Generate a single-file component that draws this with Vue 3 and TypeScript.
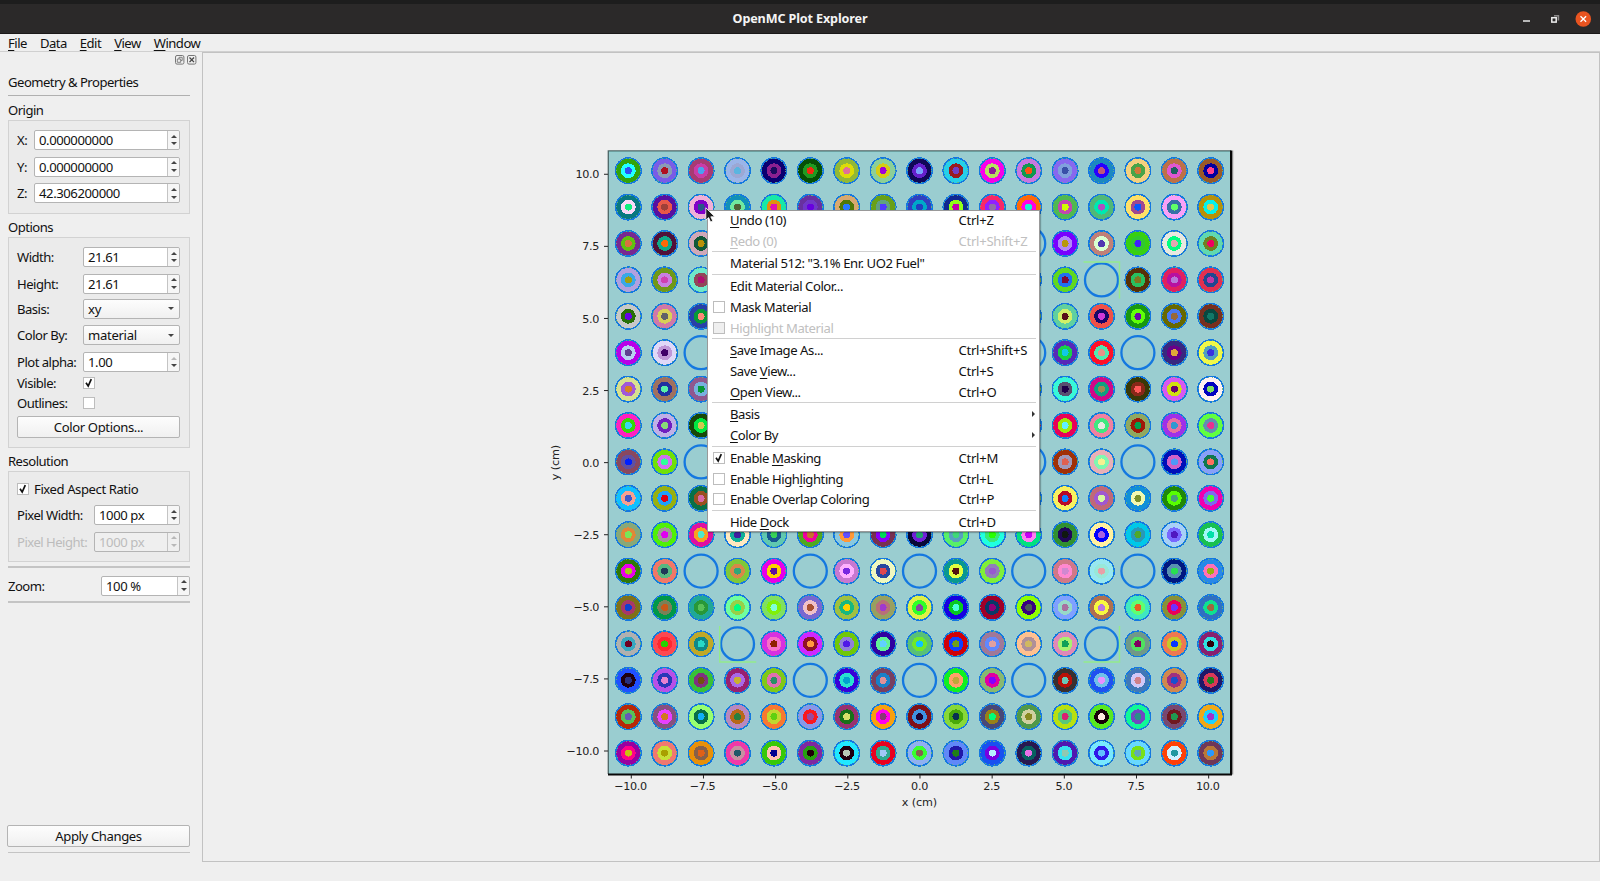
<script setup lang="ts">
interface MenuItem {
  label: string
  key?: string
  check?: 'on' | 'off'
  disabled?: boolean
  submenu?: boolean
}
interface Pin {
  x: number
  y: number
  guide: boolean
  colors: string[]
}

const barMenus = ['&File', 'D&ata', '&Edit', '&View', '&Window']

// Splits "Save &View" into the text before, the mnemonic letter, and the rest.
function parts(label: string): [string, string, string] {
  const i = label.indexOf('&')
  if (i < 0) return [label, '', '']
  return [label.slice(0, i), label[i + 1], label.slice(i + 2)]
}

const groups: MenuItem[][] = [
  [
    { label: '&Undo (10)', key: 'Ctrl+Z' },
    { label: '&Redo (0)', key: 'Ctrl+Shift+Z', disabled: true },
  ],
  [{ label: 'Material 512: "3.1% Enr. UO2 Fuel"' }],
  [
    { label: 'Edit Material Color...' },
    { label: 'Mask Material', check: 'off' },
    { label: 'Highlight Material', check: 'off', disabled: true },
  ],
  [
    { label: '&Save Image As...', key: 'Ctrl+Shift+S' },
    { label: 'Save &View...', key: 'Ctrl+S' },
    { label: '&Open View...', key: 'Ctrl+O' },
  ],
  [
    { label: '&Basis', submenu: true },
    { label: '&Color By', submenu: true },
  ],
  [
    { label: 'Enable &Masking', key: 'Ctrl+M', check: 'on' },
    { label: 'Enable High&lighting', key: 'Ctrl+L', check: 'off' },
    { label: 'Enable Overlap Coloring', key: 'Ctrl+P', check: 'off' },
  ],
  [{ label: 'Hide &Dock', key: 'Ctrl+D' }],
]

const origin = [
  { name: 'X:', value: '0.000000000' },
  { name: 'Y:', value: '0.000000000' },
  { name: 'Z:', value: '42.306200000' },
]

// One string per lattice row: cladding/annulus/centre colours; G is a guide tube,
// a number skips that many positions.
const lattice: string[] = [
  '33a30a/22ffff/2f4ff0 7a5ce6/8a9bb5/b01020 a83a72/c93ca8/4aa0f0 9bb5e8/9ca8d4/5ab5e0 0a0070/8a2090/1a0a60 065006/209a20/f02a10 92b836/dcdc08/e07098 8ccf98/d6cc14/a000d8 100858/6620cc/78a0ff 25d0e8/981c20/7040c8 f800e8/b8e060/8c1c98 c878e0/109850/ff5010 8868ee/80a0dd/3a50a8 1c88c0/2800ff/c05878 f4d080/48a448/d07838 bc7048/e058d0/206060 9a5a28/0000a0/ff4090',
  '087880/f8d8f8/10f080 5810a0/e85848/a04038 f0b0d8/8000c8/285888 1090b8/70e8a0/506038 18e8a8/e09010/e010b0 6830a0/7038c8/6800e0 d8a870/507808/2878ff 68a018/60a080/5038ff 3040c0/00a8c8/2040c0 102890/90ff18/c000b0 f82868/9020ff/9070a8 ff6808/ff00e0/18f0d0 50b850/c048b0/d0ff00 50b878/00e8b0/b050c0 ffe068/a04890/0858ff f8a0f8/3870a8/60ff68 b89008/08f0e8/e0c850',
  '782890/60c010/d87040 501038/10a888/ff6808 d0a8b8/105838/b89008 8 G 7800ff/b088f8/b8980f c08078/d8ffd0/5038b0 38d010/30c830/4020ff e8e8e0/00ff80/e0a8b0 60d8b0/708020/f00060',
  'b0a0e0/38a8e8/a0a010 709818/c880e0/d040b0 70e8c8/904858/b01070 8 b8b020/b8b020/b8b020 60d820/2070f0/800838 G 583008/28c060/807820 e02060/b810a0/b878d8 e03050/204890/c038a8',
  'c8c8c8/287008/6800e8 d078a8/d8d058/606068 2840a8/089838/ff8878 8 68a070/68a070/68a070 60d0a0/d0f068/581018 f05048/180868/d038d8 189810/60ff08/6808a8 686800/4878f0/986838 783020/084840/107868',
  'b800e8/b8d0f0/604090 e0d8f8/c098d8/400068 G 8 G 5828b8/18d048/10c8e8 ff1028/50e8b0/e89088 G 382880/680088/e0a838 f0f848/50a0c0/3830e0',
  'd8e090/a058d8/d88020 a07060/2030a0/58f0a8 905890/78b0e0/089838 8 70a018/70a018/70a018 38f8d8/585070/200048 d00888/10a080/a08850 383808/882818/ff5858 d858f0/d0e010/680070 fff0f0/0000c0/80e060',
  'ff20c0/38d808/38d8f0 c0b0e8/7020c0/88d878 184808/00e840/d0c850 8 c00890/c00890/c00890 e80058/a0e808/60f0ff f080a0/40e880/e8e8e0 90a860/a01808/00a050 a030e8/e870a0/3098d0 60ff40/6090b0/e83090',
  '884860/6050a0/0020ff 70e008/d070f0/30ff98 G 8 G a03008/a098b8/e06050 e8b0b8/80f8b0/f8f090 G 0010b8/d060c8/5098f8 88a0f8/107850/ff7060',
  '10c0ff/f8a090/4058c8 98b010/20a0f8/e00010 087048/985020/d868a8 8 90b058/90b058/90b058 f8f060/b80828/1080ff c06878/a058d0/d8f8a0 1090d8/f0f8b0/789028 208808/58ff00/48a078 f000b0/8068f0/40ff38',
  '88a878/e08838/78e858 50f008/a09898/e000f0 e010a0/f8a020/50e8c8 ffe8c0/10b098/4020a0 60c8b0/185890/38d058 50a820/f000a0/c87030 88c8e0/ff9838/6050ff 783050/8800f8/00d858 080838/7020d8/20a070 58f068/58a0c0/40d878 20ffe0/38e878/28ff00 00e080/ff80f0/c800f8 309030/200858/101810 fff0a0/0000ff/a860e0 00c8e8/2898b8/50a828 a8d0f8/7868ff/5018c0 18c050/a0f8f8/00e0a8',
  '307808/e800e8/a8c818 f07868/58b880/203858 G 80c838/d88848/30a878 e800e8/ffd000/6010a0 G c878d0/ffb0ff/7828e0 f0f8c0/2848a0/e04850 G 089890/e0ff40/501010 80f038/9080b8/9858d0 G d07888/ff88d0/d088d0 98e8f0/98e8d8/e8a0a8 G 001880/5890b0/28e050 2888e8/ff70b8/98b010',
  '807018/a83868/1040d0 009848/788058/c85818 20a898/289838/58c058 70ffa0/98d048/00ff80 80e060/80f008/80ffd8 7868d0/f0c0c8/a85030 a0c040/18b880/ffd000 98a060/b87078/a038d0 e0f048/30ff28/8848a0 1800e0/08c820/48ffd8 a00028/083868/900078 90ff00/380080/485858 80a0ff/98d8c8/a870a0 b07050/f8f840/b878e0 40e8c0/60ff70/e86020 889038/e80058/7030ff 3070c0/10e090/a06840',
  'b0b0b0/38a8c0/700020 ff4850/ff2830/28d000 c0a828/108888/28d8c8 G d830e0/f870c8/902000 d028ff/901028/ff9840 70c808/9080d8/5018e8 3000a0/60f098/60d0ff 58c078/70e828/10c0ff d00008/1040ff/70a018 a07898/6088ff/e0a0a0 ffc090/b09098/d0b860 e088b8/a8f070/10a058 G 709888/50e060/800060 f07850/c8c828/0838ff 882070/30e0e0/300008',
  '2050ff/200010/283080 b850e8/2838b8/e880d0 38c038/803080/705010 982070/a868e8/c8b030 80c818/e070b0/289068 G 3800d8/28e0d0/00a0d0 784060/1880c8/e09098 G 10f020/ffa068/c0a838 88b870/e000a0/8000ff G 383030/b81008/68c8b8 2050f0/70c0e8/e890ff 4078b8/d0c8f8/d08088 d08850/a03080/1850d0 201868/d83858/208020',
  'b82808/58c058/6858b8 885080/e840ff/d07820 98ff70/087048/10b0f8 b888c0/b86818/288040 f87830/c0d830/60d010 8898e8/f81820/9848a0 983070/187018/d8e068 f8a010/ff00f0/883878 801018/4090e0/200030 88d838/48a808/083050 484878/988018/00ff78 509848/d0d0a0/888820 b8e010/58c878/d82070 58e820/180008/ffe8e0 10f898/7048c0/289088 784870/701820/209850 f0a818/20d0ff/a030d0',
  '9800a0/ff0088/c8c010 f07870/c8e038/a8a000 e89008/886048/e06018 f038a8/c890a0/205868 38c808/ffc0b0/000090 8028a0/28a010/200008 20e8ff/200010/b8c8b8 e80020/30a890/a0c8f8 90b0f0/38ff30/886050 6088f8/2018a8/208018 1850f0/7800e0/b8f0ff 281850/086060/e870e8 5018b0/38e0f0/90c8b0 78e8ff/3018e8/60c0ff 68d8ff/78e018/60a8b8 ff4008/d0f0ff/2098a0 703858/b87838/2898ff',
]

const PITCH = 36.4
const pins: Pin[] = []
lattice.forEach((row, r) => {
  let c = 0
  for (const cell of row.split(' ')) {
    if (/^\d$/.test(cell)) {
      c += Number(cell)
      continue
    }
    pins.push({
      x: 88.3 + c * PITCH,
      y: 30.7 + r * PITCH,
      guide: cell === 'G',
      colors: cell.split('/').map((v) => '#' + v),
    })
    c++
  }
})

const ticks = [-10, -7.5, -5, -2.5, 0, 2.5, 5, 7.5, 10].map((v, i) => ({
  text: (v < 0 ? '−' : '') + Math.abs(v).toFixed(1),
  width: v <= -10 ? 32.8 : v < 0 ? 25.8 : v === 10 ? 23.8 : 17.2,
  x: 91.3 + i * 72.17,
  y: 611 - i * 72.09,
}))
</script>

<template>
  <div class="window">
    <header class="titlebar">
      <span class="title">OpenMC Plot Explorer</span>
      <svg class="controls" width="80" height="30" viewBox="0 0 80 30">
        <path d="M3 17h7" stroke="#ddd" stroke-width="1.6" />
        <path d="M34 11.8h4.4v4.6" fill="none" stroke="#8a8888" stroke-width="1.6" />
        <rect x="31.8" y="13.7" width="4.4" height="4.4" fill="#2b2929" stroke="#eee" stroke-width="1.5" />
        <circle cx="63.3" cy="15" r="7.8" fill="#e95420" />
        <path d="M60.5 12.2l5.6 5.6M66.1 12.2l-5.6 5.6" stroke="#fff" stroke-width="1.3" />
      </svg>
    </header>

    <nav class="menubar">
      <span v-for="m in barMenus" :key="m">{{ parts(m)[0] }}<u>{{ parts(m)[1] }}</u>{{ parts(m)[2] }}</span>
    </nav>

    <main class="body">
      <aside class="dock">
        <div class="dock-buttons">
          <svg width="22" height="10" viewBox="0 0 22 10" fill="none" stroke="#777">
            <rect x=".5" y=".5" width="8.4" height="8.6" rx="1.5" />
            <path d="M4 4V2.3h3.2v3.2H6M2.3 4h3.4v3.3H2.3z" stroke-width=".9" />
            <rect x="12.5" y=".5" width="8.4" height="8.6" rx="1.5" />
            <path d="M14.5 2.5l4.5 4.6M19 2.5l-4.5 4.6" stroke="#444" stroke-width="1.3" />
          </svg>
        </div>
        <h1 class="heading">Geometry &amp; Properties</h1>
        <hr />

        <h2 class="origin-title">Origin</h2>
        <section class="box origin">
          <div v-for="o in origin" :key="o.name" class="row">
            <label>{{ o.name }}</label>
            <div class="spin">{{ o.value }}<span class="arrows"><i class="up"></i><i class="down"></i></span></div>
          </div>
        </section>

        <h2 class="options-title">Options</h2>
        <section class="box options">
          <div class="row"><label>Width:</label><div class="spin">21.61<span class="arrows"><i class="up"></i><i class="down"></i></span></div></div>
          <div class="row height-row"><label>Height:</label><div class="spin">21.61<span class="arrows"><i class="up"></i><i class="down"></i></span></div></div>
          <div class="row basis-row"><label>Basis:</label><div class="combo">xy<i class="down"></i></div></div>
          <div class="row colorby-row"><label>Color By:</label><div class="combo">material<i class="down"></i></div></div>
          <div class="row alpha-row"><label>Plot alpha:</label><div class="spin">1.00<span class="arrows"><i class="up dim"></i><i class="down"></i></span></div></div>
          <div class="row check-row"><label>Visible:</label><span class="check"><svg viewBox="0 0 12 12"><path d="M3 5.8l2.2 3.2L8.3 2.2" /></svg></span></div>
          <div class="row check-row outlines-row"><label>Outlines:</label><span class="check"></span></div>
          <button class="color-button">Color Options...</button>
        </section>

        <h2 class="resolution-title">Resolution</h2>
        <section class="box resolution">
          <div class="row aspect"><span class="check"><svg viewBox="0 0 12 12"><path d="M3 5.8l2.2 3.2L8.3 2.2" /></svg></span>Fixed Aspect Ratio</div>
          <div class="row width-row"><label>Pixel Width:</label><div class="spin">1000 px<span class="arrows"><i class="up"></i><i class="down"></i></span></div></div>
          <div class="row disabled"><label>Pixel Height:</label><div class="spin">1000 px<span class="arrows"><i class="up dim"></i><i class="down dim"></i></span></div></div>
        </section>

        <hr class="thick" />
        <div class="row zoom"><label>Zoom:</label><div class="spin">100 %<span class="arrows"><i class="up"></i><i class="down"></i></span></div></div>
        <hr class="thick" />
        <button class="apply">Apply Changes</button>
        <hr class="thick" />
      </aside>

      <section class="canvas">
        <svg class="plot" width="720" height="680" viewBox="0 0 720 680">
          <rect x="68" y="11" width="623.5" height="623" fill="#9acdd0" />
          <path d="M69 11.8h622" stroke="#77dddd" stroke-width="1" opacity=".5" />
          <g v-for="(p, i) in pins" :key="i">
            <circle v-if="p.guide" :cx="p.x" :cy="p.y" r="16.5" fill="none" stroke="#1478e0" stroke-width="2.3" />
            <g v-else shape-rendering="crispEdges">
              <circle :cx="p.x" :cy="p.y" r="13.5" fill="#1478e0" />
              <circle :cx="p.x" :cy="p.y" r="12" :fill="p.colors[0]" />
              <circle :cx="p.x" :cy="p.y" r="12.1" class="specks" />
              <circle :cx="p.x" :cy="p.y" r="7.4" :fill="p.colors[1]" />
              <circle :cx="p.x" :cy="p.y" r="3.5" :fill="p.colors[2]" />
            </g>
          </g>
          <g fill="none" stroke="#94ea8c" stroke-width="1.4">
            <path d="M543.5 122h36v36.5" />
            <path d="M179.7 486v36h36.5" />
            <path d="M543.5 522h36v-36" />
          </g>
          <path d="M68.3 634V10.8H691" fill="none" stroke="#4d6667" stroke-width="1.3" />
          <path d="M691 10.5v624M68 634.4h624" fill="none" stroke="#080808" stroke-width="2" />
          <path d="M692.7 10.5v624" stroke="#777" stroke-width="1" />
          <g stroke="#222" stroke-width="1">
            <path v-for="t in ticks" :key="t.text" :d="`M${t.x} 635v3.5M64 ${t.y}h4`" />
          </g>
          <g class="axis">
            <text v-for="t in ticks" :key="'x' + t.text" :x="t.x - (t.text.length > 3 ? 0.4 : 0) - t.width / 2 - 0.3" y="650" :textLength="t.width">{{ t.text }}</text>
            <text v-for="t in ticks" :key="'y' + t.text" :x="59.4 - t.width" :y="t.y + 4.1" :textLength="t.width">{{ t.text }}</text>
            <text x="361.8" y="666" textLength="35.4">x (cm)</text>
            <text transform="translate(18.9 340.2) rotate(-90)" textLength="35.4">y (cm)</text>
          </g>
        </svg>
      </section>
    </main>
    <footer class="status"></footer>

    <div class="context">
      <div v-for="(g, gi) in groups" :key="gi" class="group">
        <div v-for="it in g" :key="it.label" class="item" :class="{ off: it.disabled }">
          <span class="mark"><span v-if="it.check" class="check"><svg v-if="it.check === 'on'" viewBox="0 0 12 12"><path d="M3 5.8l2.2 3.2L8.3 2.2" /></svg></span></span>
          <span class="label">{{ parts(it.label)[0] }}<u v-if="parts(it.label)[1]">{{ parts(it.label)[1] }}</u>{{ parts(it.label)[2] }}</span>
          <span class="key">{{ it.key }}</span>
          <i v-if="it.submenu" class="sub"></i>
        </div>
      </div>
    </div>

    <svg class="cursor" width="12" height="18" viewBox="0 0 12 18">
      <path d="M.8.8v12.4l2.8-2.6 2 4.4 2.2-1-2-4.2h4z" fill="#1c1c1c" stroke="#fff" stroke-width=".8" />
    </svg>
  </div>
</template>

<style>
html, body { margin: 0; background: #efefef; overflow: hidden; }
</style>

<style scoped>
.window {
  position: relative;
  width: 1600px;
  height: 881px;
  display: flex;
  flex-direction: column;
  background: #efefef;
  color: #111;
  font: 13.1px/20px "Noto Sans", "Open Sans", sans-serif;
  letter-spacing: -0.52px;
  white-space: nowrap;
}
.titlebar {
  box-sizing: border-box;
  height: 34px;
  flex: none;
  border-top: 4px solid #1d1d1d;
  border-bottom: 1px solid #1a1818;
  background: #2b2929;
  color: #f4f4f4;
  display: grid;
  grid-template-columns: 80px 1fr 80px;
  align-items: center;
}
.title { grid-column: 2; text-align: center; font-weight: 700; font-size: 12.6px; letter-spacing: -0.13px; }
.controls { grid-column: 3; }
.menubar { box-sizing: border-box; height: 18px; flex: none; display: flex; gap: 13px; padding-left: 8px; line-height: 18px; border-bottom: 1px solid #d0d0d0; }
u { text-decoration: underline; text-decoration-thickness: 1px; text-underline-offset: 2px; }
.body { flex: none; height: 810px; display: flex; }
.dock { box-sizing: border-box; width: 202px; padding: 0 12px 0 8px; display: flex; flex-direction: column; }
.dock-buttons { display: flex; justify-content: flex-end; margin-right: -7px; padding-top: 2.5px; height: 17.5px; }
h1, h2 { margin: 0; font-size: inherit; font-weight: 400; line-height: 20px; height: 20px; }
hr { width: 100%; height: 1px; margin: 0; border: 0; background: #b0b0b0; flex: none; }
.heading { margin-bottom: 3px; }
hr.thick { height: 1.5px; background: #c4c4c4; }
.origin-title { margin-top: 4px; }
.options-title { margin-top: 3.5px; }
.resolution-title { margin-top: 3px; }
.box { box-sizing: border-box; border: 1px solid #d2d2d2; background: #ebebeb; padding: 9px 9px 0 8px; display: flex; flex-direction: column; flex: none; }
.origin { height: 93.5px; gap: 6.7px; }
.options { height: 211px; }
.resolution { height: 90.5px; }
.row { display: flex; height: 20px; align-items: center; }
.row label { flex: none; }
.spin, .combo {
  box-sizing: border-box;
  height: 20px;
  flex: 1;
  border: 1px solid #b4b4b4;
  border-radius: 2px;
  background: #fff;
  padding-left: 4px;
  display: flex;
  align-items: center;
  justify-content: space-between;
}
.spin { letter-spacing: -0.42px; }
.combo { background: linear-gradient(#fdfdfd, #f0f0f0); padding-right: 5px; letter-spacing: -0.3px; }
.arrows { align-self: stretch; width: 11px; border-left: 1px solid #c4c4c4; background: #f6f6f6; display: flex; flex-direction: column; align-items: center; justify-content: center; gap: 4.5px; border-radius: 0 2px 2px 0; }
.up, .down { border: 3px solid transparent; border-top-width: 0; border-bottom: 3px solid #444; }
.down { border-bottom-width: 0; border-bottom-color: transparent; border-top: 3px solid #444; }
.up.dim { border-bottom-color: #b8b8b8; }
.down.dim { border-top-color: #b8b8b8; }
.origin label { width: 17px; }
.options label { width: 66px; }
.options .row { margin-bottom: 6.6px; }
.options .height-row { margin-bottom: 5.4px; }
.options .basis-row { margin-bottom: 6.2px; }
.options .colorby-row { margin-bottom: 6.8px; }
.options .alpha-row { margin-bottom: 5.5px; }
.options .check-row { height: 12px; margin-bottom: 7.5px; }
.options .outlines-row { margin-bottom: 6.8px; }
.check { box-sizing: border-box; width: 12px; height: 12px; flex: none; border: 1px solid #bdbdbd; background: #fff; display: block; }
.check svg { display: block; width: 12px; height: 12px; margin: -1px; }
.check path { fill: none; stroke: #111; stroke-width: 1.7; }
button { box-sizing: border-box; border: 1px solid #b4b4b4; border-radius: 2px; background: linear-gradient(#fdfdfd, #f0f0f0); font: inherit; letter-spacing: -0.38px; color: inherit; padding: 0; height: 22px; flex: none; }
.color-button { line-height: 20px; }
.resolution .aspect { height: 20px; gap: 5px; margin-top: -2px; margin-bottom: 6px; letter-spacing: -0.42px; }
.resolution .width-row { margin-bottom: 6.5px; }
.resolution label { width: 77px; }
.disabled { color: #bcbcbc; }
.disabled .spin { background: #efefef; }
.disabled .arrows { background: #efefef; }
.resolution + .thick { margin-top: 4.5px; }
.zoom { margin: 8px 0 5.5px; flex: none; }
.zoom label { width: 93px; }
.apply { margin-top: auto; margin-bottom: 5px; margin-left: -1px; }
.apply + hr { margin-bottom: 9px; }
.canvas { box-sizing: border-box; width: 1398px; border: 1px solid #c2c2c2; padding: 87px 0 0 337px; }
.plot { display: block; }
.specks { fill: none; stroke: #68b878; stroke-width: 0.9; stroke-dasharray: 1.2 4.1 1 2.8 1.4 5.7; }
.axis { font: 11.2px "DejaVu Sans", sans-serif; letter-spacing: 0; fill: #222; }
.status { flex: 1; }
.context {
  position: absolute;
  left: 707px;
  top: 209.5px;
  width: 332.5px;
  height: 322.5px;
  box-sizing: border-box;
  border: 1px solid #999;
  border-right-width: 1.5px;
  background: #fff;
  box-shadow: 1px 1px 1px rgba(0, 0, 0, 0.25);
}
.group { margin: 0 3px 0 4px; }
.group + .group { border-top: 1px solid #d0d0d0; padding-top: 0.8px; }
.group:first-child { margin-top: -0.8px; }
.item { display: flex; align-items: center; height: 20.8px; position: relative; }
.mark { width: 18px; flex: none; }
.mark .check { margin-left: 1px; }
.label { width: 228.5px; flex: none; letter-spacing: -0.43px; }
.off { color: #c0c0c0; }
.off .check { background: #efefef; }
.key { flex: 1; letter-spacing: -0.27px; }
.sub { border: 3px solid transparent; border-left: 3.5px solid #333; border-right: 0; margin-right: 1px; }
.cursor { position: absolute; left: 704.5px; top: 206.5px; }
</style>
